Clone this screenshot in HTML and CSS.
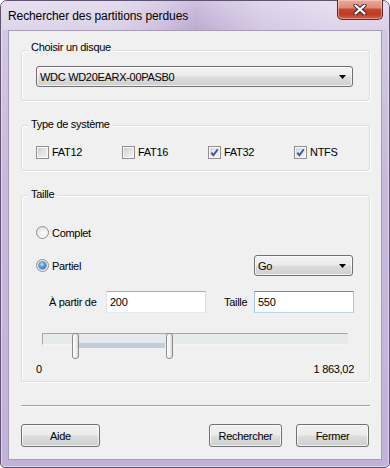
FILE: index.html
```html
<!DOCTYPE html>
<html lang="fr">
<head>
<meta charset="utf-8">
<title>Rechercher des partitions perdues</title>
<link rel="stylesheet" href="styles.css">
</head>
<body>
<div class="window">
  <div class="titlebar">
    <span class="title">Rechercher des partitions perdues</span>
    <button class="close" aria-label="Fermer">
      <svg width="14" height="11" viewBox="0 0 14 11">
        <path d="M2.5 1.5 L11.5 9.5 M11.5 1.5 L2.5 9.5" stroke="#3b2a2e" stroke-width="4.2" stroke-linecap="round"/>
        <path d="M2.5 1.5 L11.5 9.5 M11.5 1.5 L2.5 9.5" stroke="#ffffff" stroke-width="2.2" stroke-linecap="round"/>
      </svg>
    </button>
  </div>
  <div class="client">
    <div class="group g1">
      <span class="glabel">Choisir un disque</span>
      <div class="combo combo-wide">
        <span class="combo-text">WDC WD20EARX-00PASB0</span>
        <svg class="arrow" width="7" height="4" viewBox="0 0 7 4"><path d="M0 0 H7 L3.5 4 Z" fill="#000"/></svg>
      </div>
    </div>

    <div class="group g2">
      <span class="glabel">Type de système</span>
      <div class="checks">
        <label class="check"><span class="cb"></span><span>FAT12</span></label>
        <label class="check"><span class="cb"></span><span>FAT16</span></label>
        <label class="check"><span class="cb checked"><svg width="9" height="9" viewBox="0 0 9 9"><path d="M1.3 4.6 L3.4 7.2 L7.8 1.2" fill="none" stroke="#3855a2" stroke-width="1.9"/></svg></span><span>FAT32</span></label>
        <label class="check"><span class="cb checked"><svg width="9" height="9" viewBox="0 0 9 9"><path d="M1.3 4.6 L3.4 7.2 L7.8 1.2" fill="none" stroke="#3855a2" stroke-width="1.9"/></svg></span><span>NTFS</span></label>
      </div>
    </div>

    <div class="group g3">
      <span class="glabel">Taille</span>
      <div class="row row-complet">
        <span class="radio"></span><span class="rlabel">Complet</span>
      </div>
      <div class="row row-partiel">
        <span class="radio"><span class="dot"></span></span><span class="rlabel">Partiel</span>
        <div class="combo combo-go">
          <span class="combo-text">Go</span>
          <svg class="arrow" width="7" height="4" viewBox="0 0 7 4"><path d="M0 0 H7 L3.5 4 Z" fill="#000"/></svg>
        </div>
      </div>
      <div class="row row-fields">
        <span class="flabel flabel-from">À partir de</span>
        <span class="field">200</span>
        <span class="flabel flabel-size">Taille</span>
        <span class="field focused">550</span>
      </div>
      <div class="slider">
        <div class="track"></div>
        <div class="range"></div>
        <div class="thumb thumb-a"></div>
        <div class="thumb thumb-b"></div>
      </div>
      <div class="scale">
        <span>0</span>
        <span>1 863,02</span>
      </div>
    </div>

    <div class="separator"></div>

    <div class="buttons">
      <button class="btn btn-help">Aide</button>
      <span class="spacer"></span>
      <button class="btn btn-action">Rechercher</button>
      <button class="btn btn-action">Fermer</button>
    </div>
  </div>
</div>
</body>
</html>
```
FILE: styles.css
```css
* { box-sizing: border-box; }

html, body {
  margin: 0;
  padding: 0;
  background: #ffffff;
}

.window {
  width: 390px;
  height: 468px;
  display: flex;
  flex-direction: column;
  border: 1px solid #5f5470;
  border-radius: 7px 7px 5px 5px;
  background: linear-gradient(180deg, #d6cae4 0%, #c9b8dc 40%, #c4b1d9 100%);
  padding: 0 7px 7px 7px;
  box-shadow: inset 0 0 0 1px rgba(255, 255, 255, 0.45);
  font-family: "Liberation Sans", Arial, sans-serif;
  font-size: 11px;
  letter-spacing: -0.3px;
  color: #000;
}

.titlebar {
  height: 29px;
  margin: 0 -7px;
  padding-left: 7px;
  display: flex;
  align-items: flex-start;
  border-radius: 6px 6px 0 0;
  background:
    linear-gradient(180deg, rgba(255,255,255,0.30) 0%, rgba(255,255,255,0.05) 100%),
    linear-gradient(90deg, #dcd3e8 0%, #d8cee6 30%, #c9b9dc 42%, #b9a5d0 50%, #c4b2d8 56%, #d3c6e3 68%, #ddd2ea 85%, #d9cde7 100%);
}

.title {
  line-height: 29px;
  font-size: 12px;
  letter-spacing: -0.1px;
  color: #000;
  padding-top: 1px;
}

.close {
  margin-left: auto;
  margin-right: 6px;
  margin-top: -1px;
  width: 46px;
  height: 20px;
  padding: 0;
  border: 1px solid #5b2a26;
  border-top: none;
  border-radius: 0 0 5px 5px;
  background: linear-gradient(180deg, #e9aa9b 0%, #dc8c78 40%, #c8452f 50%, #c13a22 75%, #d4643f 100%);
  box-shadow: inset 0 0 0 1px rgba(255, 220, 210, 0.45);
  display: flex;
  align-items: center;
  justify-content: center;
}

.client {
  flex: 1;
  background: #f0f0f0;
  border: 1px solid #a59bb6;
  padding: 19px 11px 0 12px;
  display: flex;
  flex-direction: column;
}

.group {
  position: relative;
  border: 1px solid #d5dfe5;
  border-radius: 3px;
  box-shadow: inset 1px 1px 0 #ffffff, 1px 1px 0 #ffffff;
  padding: 0 16px 0 14px;
}

.glabel {
  position: absolute;
  left: 6px;
  top: -8px;
  padding: 0 3px;
  line-height: 13px;
  background: #f0f0f0;
  white-space: nowrap;
}

.g1 { padding-top: 15px; padding-bottom: 13px; }
.g1 .glabel { top: -10px; }

.g2 { margin-top: 24px; padding-top: 20px; padding-bottom: 11px; }

.g3 { margin-top: 24px; padding-top: 26px; padding-bottom: 4px; }

/* combobox */
.combo {
  height: 21px;
  display: flex;
  align-items: center;
  padding: 0 6px 0 3px;
  border: 1px solid #707070;
  border-radius: 3px;
  background: linear-gradient(180deg, #f2f2f2 0%, #ebebeb 48%, #dddddd 52%, #cfcfcf 100%);
  box-shadow: inset 0 0 0 1px rgba(255, 255, 255, 0.7);
}
.combo-text { flex: 1; white-space: nowrap; }
.combo-wide { width: 317px; }
.combo-go { width: 99px; margin-left: auto; }
.arrow { flex-shrink: 0; }

/* checkboxes */
.checks { display: flex; height: 13px; }
.check {
  width: 86px;
  flex-shrink: 0;
  display: flex;
  align-items: center;
  gap: 3px;
  line-height: 13px;
}
.cb {
  width: 13px;
  height: 13px;
  flex-shrink: 0;
  border: 1px solid #8e8f8f;
  background: linear-gradient(135deg, #c2c6cc 0%, #dfe1e3 45%, #f4f4f4 100%);
  box-shadow: inset 0 0 0 1px #f8f8f8;
  display: flex;
  align-items: center;
  justify-content: center;
}
.cb.checked { background: linear-gradient(135deg, #ccd0d5 0%, #e6e7e9 45%, #f6f6f6 100%); }

/* radio rows */
.row { display: flex; align-items: center; }
.row-complet { height: 21px; }
.row-partiel { height: 21px; margin-top: 12px; }
.row-fields { height: 22px; margin-top: 15px; padding-left: 13px; }

.radio {
  width: 13px;
  height: 13px;
  flex-shrink: 0;
  border-radius: 50%;
  border: 1px solid #929292;
  background: radial-gradient(circle at 60% 65%, #ffffff 0%, #f0f0f0 40%, #d4d4d4 100%);
  display: flex;
  align-items: center;
  justify-content: center;
}
.dot {
  width: 7px;
  height: 7px;
  border-radius: 50%;
  background: radial-gradient(circle at 40% 35%, #c4e8ff 0%, #4fa2e2 40%, #1b5fa8 100%);
  box-shadow: 0 0 0 0.5px #1d4f88;
}
.rlabel { margin-left: 3px; }

/* fields */
.flabel { flex-shrink: 0; white-space: nowrap; }
.flabel-from { width: 57px; }
.flabel-size { width: 30px; margin-left: 18px; }
.field {
  width: 100px;
  height: 22px;
  flex-shrink: 0;
  background: #ffffff;
  border: 1px solid;
  border-color: #abadb3 #dbdfe6 #e3e9ef #e2e3ea;
  padding-left: 3px;
  display: flex;
  align-items: center;
}
.field.focused { border-color: #5b8fc0 #a9c8e6 #b7d4ee #a9c8e6; }

/* slider */
.slider {
  position: relative;
  height: 26px;
  margin-top: 20px;
}
.track {
  margin-left: 6px;
  margin-top: 7px;
  width: 306px;
  height: 12px;
  border: 1px solid;
  border-color: #a7a7a7 #e8e8e8 #f4f4f4 #a7a7a7;
  background: #e7eaea;
}
.range {
  position: absolute;
  left: 43px;
  top: 10px;
  width: 86px;
  height: 5px;
  background: #c0ceda;
}
.thumb {
  position: absolute;
  top: 0;
  width: 7px;
  height: 26px;
  border: 1px solid #8b8b8b;
  border-radius: 3px;
  background: linear-gradient(90deg, #ffffff 0%, #f2f2f2 50%, #d8d8d8 100%);
}
.thumb-a { left: 36px; }
.thumb-b { left: 130px; }

.scale {
  display: flex;
  justify-content: space-between;
  line-height: 15px;
  margin-top: 3px;
  margin-right: -1px;
}

/* bottom */
.separator {
  margin-top: 23px;
  height: 2px;
  border-top: 1px solid #a0a0a0;
  border-bottom: 1px solid #ffffff;
}

.buttons {
  display: flex;
  margin-top: 17px;
  padding-right: 1px;
  gap: 14px;
}
.spacer { flex: 1; }
.btn {
  height: 23px;
  padding: 0;
  font-family: inherit;
  font-size: 11px;
  letter-spacing: -0.3px;
  color: #000;
  border: 1px solid #707070;
  border-radius: 3px;
  background: linear-gradient(180deg, #f2f2f2 0%, #ebebeb 48%, #dddddd 52%, #cfcfcf 100%);
  box-shadow: inset 0 0 0 1px rgba(255, 255, 255, 0.7);
}
.btn-help { width: 79px; }
.btn-action { width: 73px; }
.buttons .spacer + .btn { margin-left: -14px; }
```
